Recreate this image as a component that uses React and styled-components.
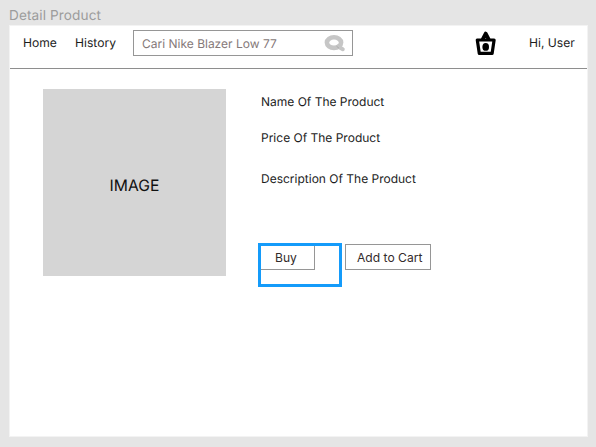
import React from "react";
import styled, { createGlobalStyle } from "styled-components";

const GlobalStyle = createGlobalStyle`
  * { box-sizing: border-box; }
  body {
    margin: 0;
    background: #e5e5e5;
    font-family: Inter, "Liberation Sans", sans-serif;
    color: #1c1c1c;
    overflow: hidden;
    text-rendering: geometricPrecision;
  }
`;

const Canvas = styled.main`
  width: 596px;
  height: 447px;
  padding: 6px 8px 10px 9px;
`;

const FrameTitle = styled.div`
  height: 19px;
  line-height: 20px;
  font-size: 13.6px;
  letter-spacing: 0.11px;
  color: #9c9c9c;
  white-space: nowrap;
`;

const Frame = styled.section`
  width: 579px;
  height: 412px;
  background: #fff;
  border: 1px solid #f3f3f3;
`;

const Header = styled.header`
  display: flex;
  align-items: flex-start;
  height: 43px;
  padding: 4px 12px 0 13px;
  border-bottom: 1px solid #8e8e8e;
`;

const Label = styled.span`
  flex: none;
  width: ${(p) => p.$width}px;
  line-height: 25px;
  font-size: 12.1px;
  white-space: nowrap;
`;

const SearchBox = styled.div`
  flex: none;
  display: flex;
  align-items: center;
  justify-content: space-between;
  width: 220px;
  height: 26px;
  padding: 0 6px 0 8px;
  border: 1px solid #969696;
  font-size: 12px;
  color: #857979;
  white-space: nowrap;
`;

const BasketIcon = styled.svg`
  flex: none;
  margin: 0 32px 0 122px;
`;

const Content = styled.div`
  display: flex;
  padding: 20px 0 0 33px;
`;

const ImagePlaceholder = styled.div`
  width: 183px;
  height: 187px;
  line-height: 194px;
  text-align: center;
  background: #d5d5d5;
  font-size: 15.7px;
  color: #111;
`;

const Details = styled.div`
  padding-left: 32px;
`;

const DetailLine = styled.p`
  margin: 0 0 ${(p) => p.$gap}px 3px;
  height: 24px;
  line-height: 25px;
  font-size: 12px;
  white-space: nowrap;
`;

const Actions = styled.div`
  display: flex;
  align-items: flex-start;
`;

const Selection = styled.div`
  width: 84px;
  height: 44px;
  margin-right: 3px;
  border: 3px solid #149bfa;
`;

const Button = styled.button`
  display: block;
  width: ${(p) => p.$width}px;
  height: ${(p) => (p.$nested ? 24 : 26)}px;
  margin: ${(p) => p.$top || 0}px 0 0;
  padding: 0 0 0 ${(p) => p.$inset}px;
  background: transparent;
  border: 1px solid #969696;
  border-top-width: ${(p) => (p.$nested ? 0 : 1)}px;
  border-left-width: ${(p) => (p.$nested ? 0 : 1)}px;
  text-align: left;
  font-family: inherit;
  font-size: 12.1px;
  color: #332b2b;
  white-space: nowrap;
`;

export default function App() {
  return (
    <>
      <GlobalStyle />
      <Canvas>
        <FrameTitle>Detail Product</FrameTitle>
        <Frame>
          <Header>
            <Label $width={52}>Home</Label>
            <Label $width={58}>History</Label>
            <SearchBox>
              <span>Cari Nike Blazer Low 77</span>
              <svg width="22" height="18" viewBox="0 0 22 18">
                <ellipse cx="10" cy="8.6" rx="7.1" ry="5.3" fill="none" stroke="#c6c6c6" strokeWidth="4.6" />
                <path d="M14 12.6 L18.8 15.2" stroke="#c6c6c6" strokeWidth="4" strokeLinecap="round" />
                <path d="M12.5 12.2 L15 14.2" stroke="#adadad" strokeWidth="1" />
              </svg>
            </SearchBox>
            <BasketIcon width="22" height="27" viewBox="0 0 22 27">
              <path d="M7.6 9.6 L10.7 3.6 L13.8 9.6" fill="none" stroke="#000" strokeWidth="3.8" strokeLinejoin="round" />
              <path d="M2.3 10 H19.1 L17.1 23.4 H4.3 Z" fill="#fff" stroke="#000" strokeWidth="3.2" strokeLinejoin="round" />
              <ellipse cx="10.7" cy="16.9" rx="3.3" ry="3.9" fill="#000" />
            </BasketIcon>
            <Label $width={46}>Hi, User</Label>
          </Header>
          <Content>
            <ImagePlaceholder>IMAGE</ImagePlaceholder>
            <Details>
              <DetailLine $gap={12}>Name Of The Product</DetailLine>
              <DetailLine $gap={17}>Price Of The Product</DetailLine>
              <DetailLine $gap={53}>Description Of The Product</DetailLine>
              <Actions>
                <Selection>
                  <Button $width={54} $inset={14} $nested>Buy</Button>
                </Selection>
                <Button $width={86} $inset={11} $top={1}>Add to Cart</Button>
              </Actions>
            </Details>
          </Content>
        </Frame>
      </Canvas>
    </>
  );
}
